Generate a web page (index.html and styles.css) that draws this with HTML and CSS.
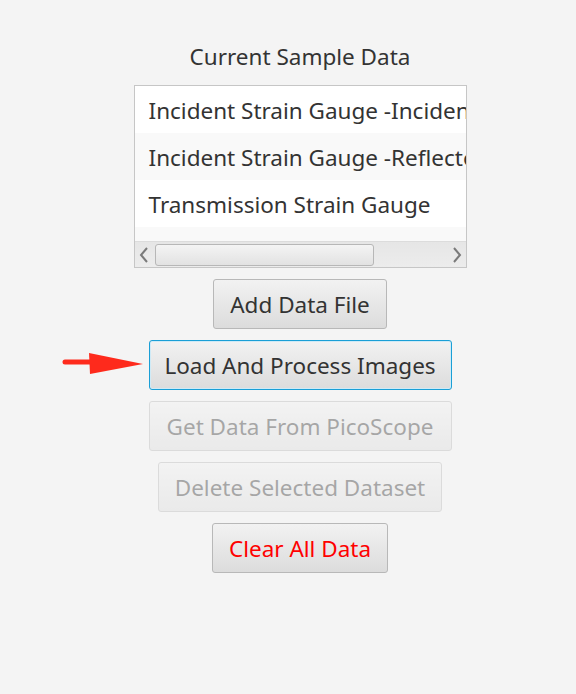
FILE: index.html
```html
<!DOCTYPE html>
<html>
<head>
<meta charset="utf-8">
<link rel="stylesheet" href="styles.css">
</head>
<body>
<div class="page">
  <div class="column">
    <div class="title">Current Sample Data</div>
    <div class="list">
      <div class="rows">
        <div class="row odd">Incident Strain Gauge -Incident Pulse</div>
        <div class="row even">Incident Strain Gauge -Reflected Pulse</div>
        <div class="row odd">Transmission Strain Gauge</div>
        <div class="row even"></div>
      </div>
      <div class="hscroll">
        <svg class="arr" width="10" height="16" viewBox="0 0 10 16"><path d="M8 1 L2 8 L8 15" fill="none" stroke="#7a7a7a" stroke-width="2"/></svg>
        <div class="track"><div class="thumb"></div></div>
        <svg class="arr" width="10" height="16" viewBox="0 0 10 16"><path d="M2 1 L8 8 L2 15" fill="none" stroke="#7a7a7a" stroke-width="2"/></svg>
      </div>
    </div>
    <button class="btn w-add">Add Data File</button>
    <div class="focus-wrap">
      <svg class="pointer" width="82" height="24" viewBox="0 0 82 24"><line x1="3" y1="10" x2="30" y2="10" stroke="#fe2a1c" stroke-width="5" stroke-linecap="round"/><polygon points="27,1 81,12 28,22" fill="#fe2a1c"/></svg>
      <button class="btn focused w-load">Load And Process Images</button>
    </div>
    <button class="btn disabled w-pico">Get Data From PicoScope</button>
    <button class="btn disabled w-del">Delete Selected Dataset</button>
    <button class="btn danger w-clear">Clear All Data</button>
  </div>
</div>
</body>
</html>
```
FILE: styles.css
```css
html, body {
  margin: 0;
  padding: 0;
  background: #f4f4f4;
}
body {
  font-family: "Noto Sans", "Open Sans", sans-serif;
  color: #333333;
}
.page {
  width: 576px;
  height: 694px;
  padding-left: 24px;
  box-sizing: border-box;
}
.column {
  display: flex;
  flex-direction: column;
  align-items: center;
  padding-top: 42px;
  gap: 11px;
}
.title {
  font-size: 22.5px;
  line-height: 30px;
  margin-bottom: 2px;
}
.list {
  width: 333px;
  height: 183px;
  border: 1px solid #c6c6c6;
  box-sizing: border-box;
  background: #ffffff;
  display: flex;
  flex-direction: column;
  overflow: hidden;
}
.rows {
  flex: 1;
  overflow: hidden;
}
.row {
  height: 47px;
  box-sizing: border-box;
  padding-top: 2px;
  line-height: 45px;
  padding-left: 14px;
  font-size: 22.5px;
  white-space: nowrap;
  overflow: hidden;
}
.odd { background: #ffffff; }
.even { background: #f9f9f9; }
.hscroll {
  height: 26px;
  display: flex;
  align-items: center;
  background: linear-gradient(#e6e6e6, #ececec);
  border-top: 1px solid #dcdcdc;
  box-sizing: border-box;
  padding: 0 4px;
  gap: 6px;
}
.track {
  flex: 1;
  height: 22px;
}
.thumb {
  width: 219px;
  height: 22px;
  box-sizing: border-box;
  border: 1px solid #b7b7b7;
  border-radius: 3px;
  background: linear-gradient(#f4f4f4, #e2e2e2);
}
.btn {
  height: 50px;
  box-sizing: border-box;
  border: 1px solid #b8b8b8;
  border-radius: 3px;
  background: linear-gradient(#f2f2f2, #dcdcdc);
  font-family: "Noto Sans", "Open Sans", sans-serif;
  font-size: 22.5px;
  color: #333333;
  padding: 0;
  flex: none;
}
.w-add { width: 174px; }
.w-load { width: 303px; }
.w-pico { width: 303px; }
.w-del { width: 284px; }
.w-clear { width: 176px; }
.focus-wrap {
  position: relative;
  display: flex;
}
.pointer {
  position: absolute;
  left: -87px;
  top: 12px;
}
.focused {
  border: 1px solid #1a9fd6;
  box-shadow: inset 0 0 0 1px #cfeaf6;
}
.disabled {
  opacity: 0.4;
}
.danger {
  color: #ff0000;
}
```
